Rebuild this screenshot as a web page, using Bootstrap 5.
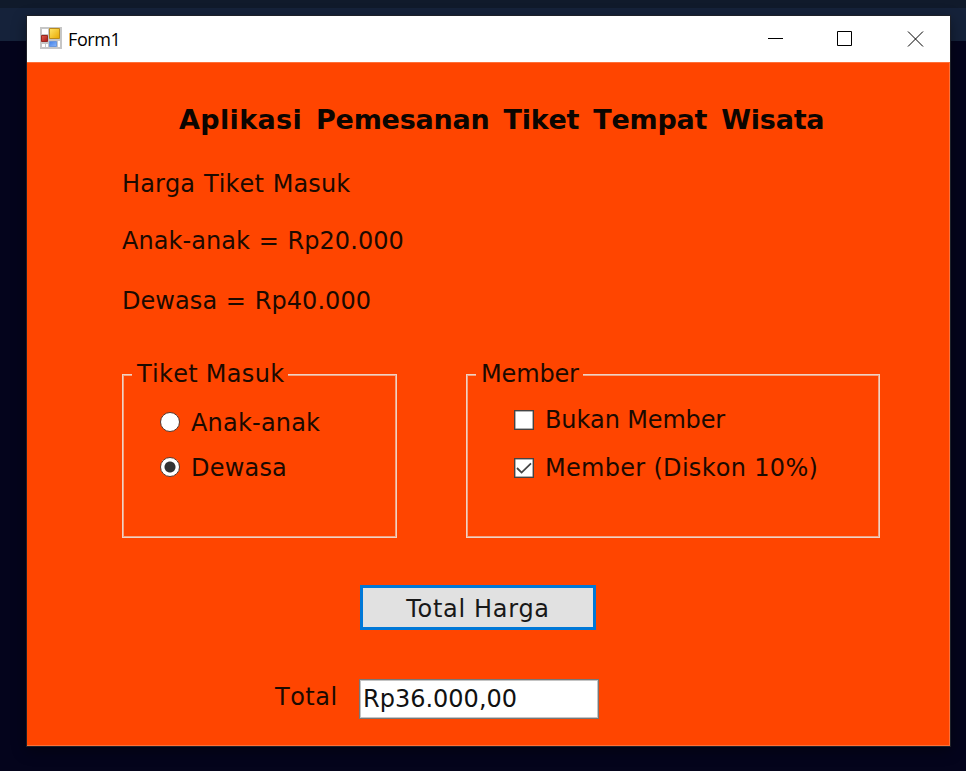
<!DOCTYPE html>
<html lang="id">
<head>
<meta charset="utf-8">
<meta name="viewport" content="width=device-width, initial-scale=1">
<title>Form1</title>
<link href="https://cdn.jsdelivr.net/npm/bootstrap@5.3.0/dist/css/bootstrap.min.css" rel="stylesheet">
<style>
  body { height: 771px; overflow: hidden; padding: 16px 16px 0 27px;
    background: linear-gradient(#101a2b 0 8px, #15223a 8px 41px, #04041c 41px 100%);
    font-family: "DejaVu Sans", Verdana, sans-serif; font-size: 24px; line-height: 30px; color: #1c0a00; font-kerning: none; }
  .form-window { width: 923px; height: 730px; background: #ff4500; box-shadow: 0 0 0 1px #1d2028, 0 4px 14px rgba(0,0,0,.45); }
  .title-bar { height: 46px; padding-left: 13px; background: #fff; }
  .title-text { font: 18px/24px "Open Sans", "Noto Sans", sans-serif; color: #000; margin: 0 0 0 6px; letter-spacing: -.4px; }
  .caption-btn { width: 70px; height: 46px; }
  .app-icon { margin-top: -2px; }
  .client-area { height: 684px; border: solid #ff7038; border-width: 1px 1px 1px 0; padding: 40px 69px 0 95px; }
  .app-title { font-size: 27px; line-height: 34px; font-weight: 700; color: #0c0500; word-spacing: 4.8px; letter-spacing: -.22px; margin: 0 0 32px 57px; white-space: nowrap; }
  .title-lead { letter-spacing: .35px; }
  .price-line { white-space: nowrap; height: 30px; word-spacing: 1px; letter-spacing: .06px; }
  .price-heading { letter-spacing: .12px; }
  .price-child { margin-top: 27px; }
  .price-adult { margin-top: 30px; }
  .group-area { margin-top: 58px; }
  .group-frame { height: 164px; border: 1px solid #f0d2c4; box-shadow: inset 0 0 0 1px #f2a484; white-space: nowrap; padding: 1px; }
  .group-caption { background: #ff4500; padding: 0 4px 0 5px; margin: -17px 0 0 8px; width: max-content; height: 30px; letter-spacing: .3px; }
  .ticket-group { width: 275px; }
  .member-group { width: 414px; }
  .ticket-group .option-row { margin: 15px 0 0 36px; }
  .ticket-group .group-caption + .option-row { margin-top: 19px; }
  .member-group .option-row { margin: 18px 0 0 46px; }
  .member-group .group-caption + .option-row { margin-top: 16px; }
  .form-check-input.opt { float: none; margin: 0; width: 20px; height: 20px; border: 1.5px solid #54382e; background-color: #fff; flex: none; }
  .form-check-input.opt:checked { border-color: #54382e; }
  .form-check-input.opt[type=radio] { margin-top: -2px; }
  .form-check-input.opt[type=checkbox] { border-radius: 0; border: 1px solid #444; box-shadow: inset 0 0 0 .5px #666; }
  .form-check-input.opt[type=radio]:checked { background-image: radial-gradient(circle, #333 0 5px, #fff 6px); }
  .form-check-input.opt[type=checkbox]:checked { background-image: url("data:image/svg+xml,%3csvg xmlns='http://www.w3.org/2000/svg' viewBox='0 0 18 18'%3e%3cpath fill='none' stroke='%23444' stroke-width='1.8' d='M2 9l4.600 4.600L16 4.400'/%3e%3c/svg%3e"); }
  .option-row { gap: 11px; letter-spacing: .2px; }
  .option-wide { letter-spacing: .3px; }
  .option-tight { letter-spacing: -.15px; }
  .btn-total { width: 236px; height: 45px; padding: 2px 0 0; border: 3px solid #0078d7; background: #e1e1e1; color: #181818; font-size: 24px; line-height: 30px; letter-spacing: .7px; margin: 47px 0 0 238px; }
  .total-row { margin: 49px 0 0 153px; }
  .total-label { width: 84px; height: 30px; margin-top: 3px; letter-spacing: .5px; }
  .form-control.total-box { width: 240px; height: 40px; padding: 0 2px 0 3px; border: 1px solid #777; box-shadow: inset 0 0 0 1px #c4c4c4; color: #111; font-size: 24px; line-height: 30px; }
</style>
</head>
<body>
<main class="form-window d-flex flex-column">
  <header class="title-bar d-flex align-items-center">
    <svg class="app-icon" width="22" height="22" viewBox="0 0 22 22">
      <defs>
        <linearGradient id="gy" x2="1" y2="1"><stop stop-color="#ffe66a"/><stop offset="1" stop-color="#e8a800"/></linearGradient>
        <linearGradient id="gr" x2="1" y2="1"><stop stop-color="#e0604c"/><stop offset="1" stop-color="#a81818"/></linearGradient>
        <linearGradient id="gb" x2="1" y2="1"><stop stop-color="#3f7fe8"/><stop offset="1" stop-color="#8ab6fa"/></linearGradient>
      </defs>
      <path fill="#c6c6c6" d="M0 0h22v22H0z"/>
      <path fill="#fff" d="M2 2h6v5H2zM2 17h3v3H2zM6 17h2v3H6zM18 14h2v6h-2z"/>
      <path fill="url(#gy)" stroke="#b88a1c" d="M9.500 1.500h10v10h-10z"/>
      <path fill="url(#gr)" stroke="#982820" d="M1.500 8.500h6v6h-6z"/>
      <path fill="url(#gb)" stroke="#6a96dc" d="M9.500 14.500h7v5h-7z"/>
    </svg>
    <span class="title-text">Form1</span>
    <div class="d-flex ms-auto">
      <span class="caption-btn"><svg width="70" height="46"><path d="M28 22.500h15" stroke="#000"/></svg></span>
      <span class="caption-btn"><svg width="70" height="46"><path d="M27.500 15.500h14v14h-14z" fill="none" stroke="#000"/></svg></span>
      <span class="caption-btn"><svg width="70" height="46"><path d="M28 15.500l15 15M43 15.500l-15 15" stroke="#000" stroke-width="1"/></svg></span>
    </div>
  </header>
  <section class="client-area d-flex flex-column">
    <h1 class="app-title"><span class="title-lead">Aplikasi</span> Pemesanan Tiket Tempat Wisata</h1>
    <div class="price-line price-heading">Harga Tiket Masuk</div>
    <div class="price-line price-child">Anak-anak = Rp20.000</div>
    <div class="price-line price-adult">Dewasa = Rp40.000</div>
    <div class="group-area d-flex justify-content-between">
      <div class="group-frame ticket-group">
        <div class="group-caption">Tiket Masuk</div>
        <label class="option-row d-flex align-items-center"><input class="form-check-input opt" type="radio" name="tiket"><span>Anak-anak</span></label>
        <label class="option-row d-flex align-items-center"><input class="form-check-input opt" type="radio" name="tiket" checked><span>Dewasa</span></label>
      </div>
      <div class="group-frame member-group">
        <div class="group-caption option-tight">Member</div>
        <label class="option-row option-tight d-flex align-items-center"><input class="form-check-input opt" type="checkbox"><span>Bukan Member</span></label>
        <label class="option-row option-wide d-flex align-items-center"><input class="form-check-input opt" type="checkbox" checked><span>Member (Diskon 10%)</span></label>
      </div>
    </div>
    <button class="btn btn-total rounded-0" type="button">Total Harga</button>
    <div class="total-row d-flex">
      <label class="total-label" for="total">Total</label>
      <input id="total" class="form-control total-box rounded-0" type="text" value="Rp36.000,00">
    </div>
  </section>
</main>
<script src="https://cdn.jsdelivr.net/npm/bootstrap@5.3.0/dist/js/bootstrap.bundle.min.js"></script>
</body>
</html>
